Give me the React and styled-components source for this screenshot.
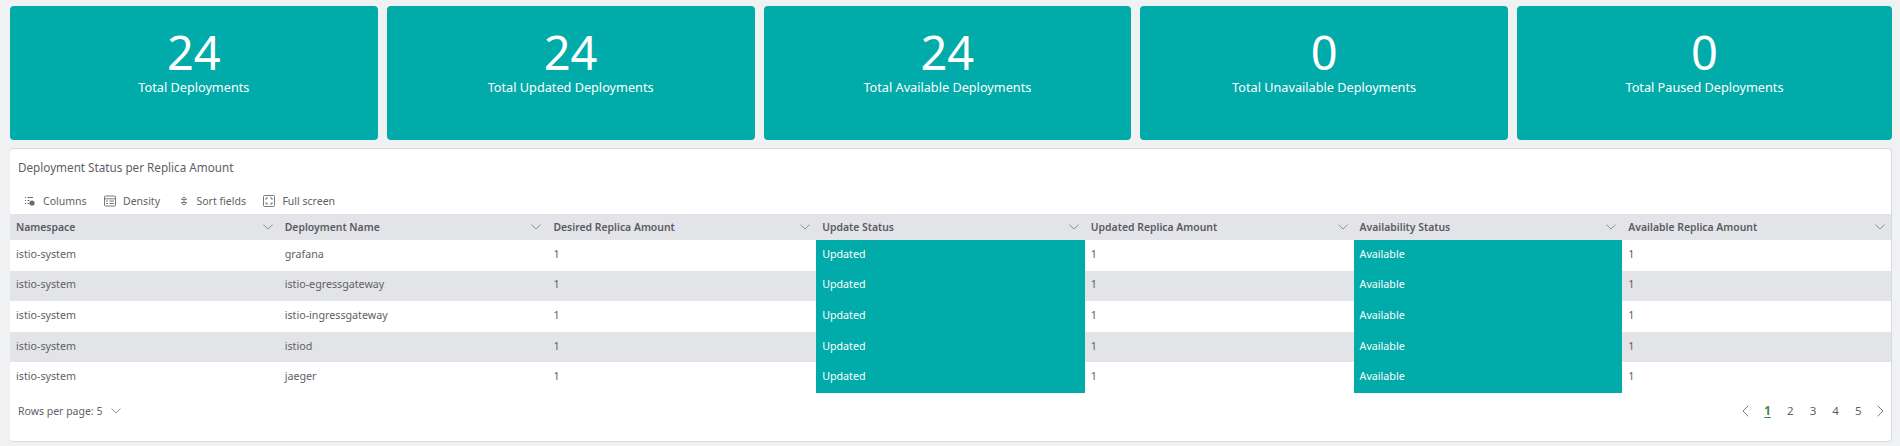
import React from "react";
import styled, { createGlobalStyle } from "styled-components";

const teal = "#00aba9";

const GlobalStyle = createGlobalStyle`
  html, body {
    margin: 0;
    padding: 0;
    background: #f0f1f3;
    font-family: "Noto Sans", "Open Sans", sans-serif;
    color: #5f6066;
  }
  * {
    box-sizing: border-box;
  }
`;

const Page = styled.div`
  width: 1900px;
  height: 446px;
  padding: 6px 8px 4px 10px;
  display: flex;
  flex-direction: column;
  gap: 8px;
`;

const Stats = styled.div`
  display: grid;
  grid-template-columns: repeat(4, 367.75px) 1fr;
  gap: 9px;
  height: 134px;
`;

const StatCard = styled.div`
  background: ${teal};
  border-radius: 4px;
  color: #fff;
  text-align: center;
  padding-top: 20px;
`;

const StatValue = styled.div`
  font-size: 47px;
  line-height: 52px;
`;

const StatLabel = styled.div`
  font-size: 12.7px;
  line-height: 18px;
`;

const Panel = styled.div`
  flex: 1;
  background: #fff;
  border: 1px solid #d9dadd;
  border-left-width: 0;
  border-radius: 4px;
  display: flex;
  flex-direction: column;
`;

const Title = styled.div`
  font-size: 11.7px;
  line-height: 18px;
  padding: 9px 0 0 8px;
  height: 38px;
`;

const Toolbar = styled.div`
  display: flex;
  align-items: center;
  gap: 17.5px;
  height: 27px;
  padding-left: 14px;
`;

const ToolButton = styled.div`
  display: flex;
  align-items: center;
  gap: 7px;
  font-size: 10.5px;
`;

const Table = styled.div`
  display: grid;
  grid-template-columns: repeat(7, 1fr);
  font-size: 10.7px;
`;

const HeaderCell = styled.div`
  height: 26px;
  background: #e3e4e8;
  display: flex;
  align-items: center;
  justify-content: space-between;
  padding: 0 6px;
  font-size: 10.4px;
  font-weight: 600;
  color: #5a5b62;
`;

const Cell = styled.div`
  height: 30.6px;
  display: flex;
  align-items: center;
  padding: 0 0 3px 6px;
  background: ${(p) => (p.$status ? teal : p.$striped ? "#e3e4e8" : "#fff")};
  color: ${(p) => (p.$status ? "#fff" : "#5f6066")};
`;

const Footer = styled.div`
  flex: 1;
  display: flex;
  align-items: center;
  justify-content: space-between;
  padding: 0 7px 12px 8px;
  font-size: 10.5px;
`;

const RowsPerPage = styled.div`
  display: flex;
  align-items: center;
  gap: 9px;
`;

const Pagination = styled.div`
  display: flex;
  align-items: center;
  gap: 13.7px;
  font-size: 11.5px;
`;

const PageNumber = styled.span`
  width: 9px;
  text-align: center;
  color: ${(p) => (p.$active ? "#3b8a4a" : "#5f6066")};
  font-weight: ${(p) => (p.$active ? 700 : 400)};
  text-decoration: ${(p) => (p.$active ? "underline" : "none")};
  text-underline-offset: 2px;
`;

const ArrowSvg = styled.svg`
  margin-left: ${(p) => (p.$next ? "0.5px" : "0")};
`;

const Chevron = () => (
  <svg width="10" height="6" viewBox="0 0 10 6" fill="none" stroke="#85868c" strokeWidth="0.9">
    <path d="M0.5 0.7 L5 5 L9.5 0.7" />
  </svg>
);

const PageArrow = ({ next }) => (
  <ArrowSvg $next={next} width="7" height="12" viewBox="0 0 7 12" fill="none" stroke="#7a7b81" strokeWidth="1">
    <path d={next ? "M0.7 0.7 L6 6 L0.7 11.3" : "M6.3 0.7 L1 6 L6.3 11.3"} />
  </ArrowSvg>
);

const ColumnsIcon = () => (
  <svg width="12" height="12" viewBox="0 0 12 12" fill="none" stroke="#6a6b71">
    <path d="M1 2.5 H2 M1 5.5 H2 M1 8.5 H2 M3.5 2.5 H9 M3.5 5.5 H5.5 M3.5 8.5 H5" strokeWidth="1" />
    <circle cx="8" cy="8" r="2.6" fill="#6a6b71" stroke="none" />
  </svg>
);

const DensityIcon = () => (
  <svg width="12" height="12" viewBox="0 0 12 12" fill="none" stroke="#6a6b71" strokeWidth="0.9">
    <rect x="0.5" y="1" width="11" height="10" rx="1" />
    <path d="M0.5 3.8 H11.5 M2 6 H4 M5.5 6 H10 M2 8.5 H4 M5.5 8.5 H10" />
  </svg>
);

const SortIcon = () => (
  <svg width="12" height="12" viewBox="0 0 12 12" fill="none" stroke="#6a6b71" strokeWidth="0.9">
    <path d="M3.5 4.5 Q6 0 8.5 4.5 Z M3.5 7.5 Q6 12 8.5 7.5 Z M6 4.5 V7.5" />
  </svg>
);

const FullScreenIcon = () => (
  <svg width="12" height="12" viewBox="0 0 12 12" fill="none" stroke="#6a6b71" strokeWidth="0.9">
    <rect x="0.5" y="0.5" width="11" height="11" rx="1" />
    <path d="M3 5 V3 H5 M7 3 H9 V5 M9 7 V9 H7 M5 9 H3 V7" />
  </svg>
);

const stats = [
  ["24", "Total Deployments"],
  ["24", "Total Updated Deployments"],
  ["24", "Total Available Deployments"],
  ["0", "Total Unavailable Deployments"],
  ["0", "Total Paused Deployments"],
];

const columns = [
  "Namespace",
  "Deployment Name",
  "Desired Replica Amount",
  "Update Status",
  "Updated Replica Amount",
  "Availability Status",
  "Available Replica Amount",
];

const deployments = ["grafana", "istio-egressgateway", "istio-ingressgateway", "istiod", "jaeger"];

const App = () => {
  return (
    <>
      <GlobalStyle />
      <Page>
        <Stats>
          {stats.map(([value, label]) => (
            <StatCard key={label}>
              <StatValue>{value}</StatValue>
              <StatLabel>{label}</StatLabel>
            </StatCard>
          ))}
        </Stats>
        <Panel>
          <Title>Deployment Status per Replica Amount</Title>
          <Toolbar>
            <ToolButton><ColumnsIcon />Columns</ToolButton>
            <ToolButton><DensityIcon />Density</ToolButton>
            <ToolButton><SortIcon />Sort fields</ToolButton>
            <ToolButton><FullScreenIcon />Full screen</ToolButton>
          </Toolbar>
          <Table>
            {columns.map((name) => (
              <HeaderCell key={name}>
                {name}
                <Chevron />
              </HeaderCell>
            ))}
            {deployments.map((name, i) => {
              const striped = i % 2 === 1;
              return (
                <React.Fragment key={name}>
                  <Cell $striped={striped}>istio-system</Cell>
                  <Cell $striped={striped}>{name}</Cell>
                  <Cell $striped={striped}>1</Cell>
                  <Cell $status>Updated</Cell>
                  <Cell $striped={striped}>1</Cell>
                  <Cell $status>Available</Cell>
                  <Cell $striped={striped}>1</Cell>
                </React.Fragment>
              );
            })}
          </Table>
          <Footer>
            <RowsPerPage>Rows per page: 5 <Chevron /></RowsPerPage>
            <Pagination>
              <PageArrow />
              <PageNumber $active>1</PageNumber>
              <PageNumber>2</PageNumber>
              <PageNumber>3</PageNumber>
              <PageNumber>4</PageNumber>
              <PageNumber>5</PageNumber>
              <PageArrow next />
            </Pagination>
          </Footer>
        </Panel>
      </Page>
    </>
  );
};

export default App;
